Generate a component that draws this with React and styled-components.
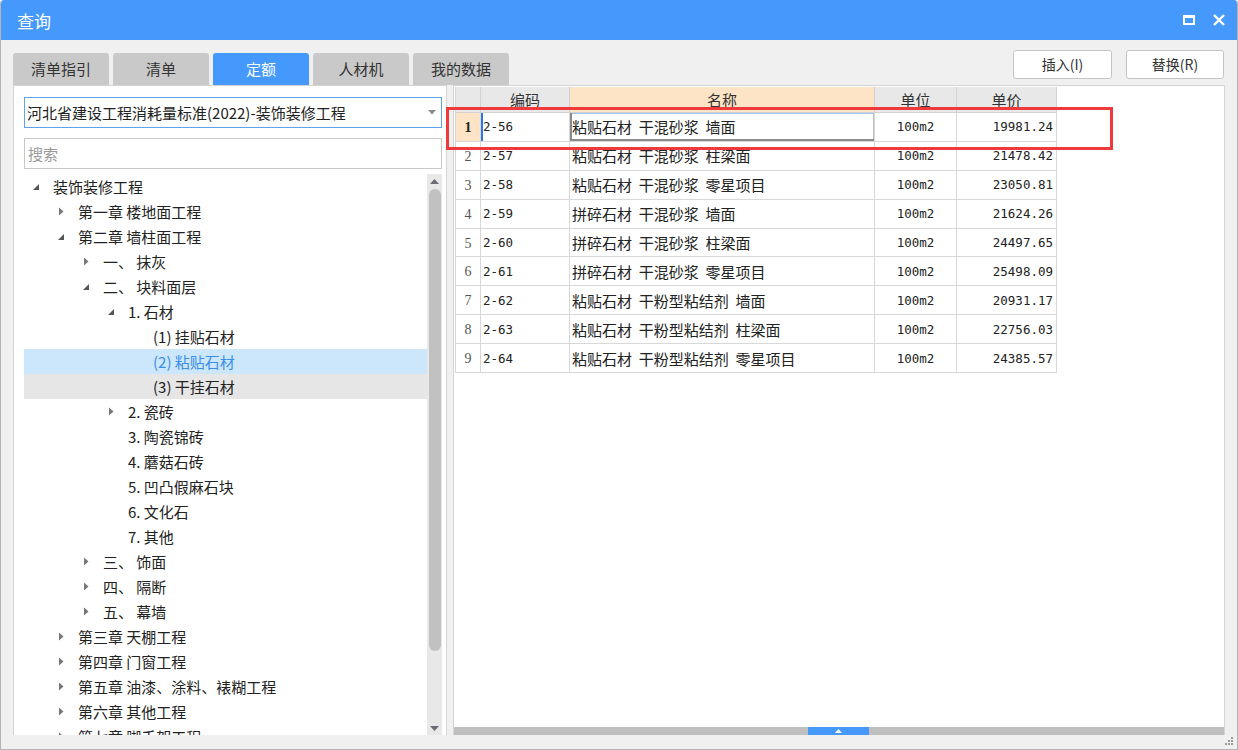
import styled, { createGlobalStyle } from "styled-components";

const GlobalStyle = createGlobalStyle`
  html, body { margin: 0; padding: 0; background: #ffffff; }
  body { font-family: "Noto Sans CJK SC", "Noto Sans", sans-serif; color: #222; }
  * { box-sizing: border-box; }
`;

const BLUE = "#4599fd";

const Window = styled.div`
  position: relative;
  width: 1238px;
  height: 750px;
  display: flex;
  flex-direction: column;
  background: #f0f0f0;
  border: 1px solid #b4b4b4;
  border-top: none;
  border-radius: 4px 4px 0 0;
  overflow: hidden;
`;

const TitleBar = styled.div`
  height: 40px;
  flex: none;
  background: ${BLUE};
  display: flex;
  align-items: center;
  padding: 0 12px 0 16px;
  color: #fff;
`;

const Title = styled.div`
  flex: 1;
  font-size: 17px;
  line-height: 20px;
  padding-top: 2px;
`;

const TitleButtons = styled.div`
  display: flex;
  align-items: center;
  gap: 18px;
`;

const Body = styled.div`
  flex: 1;
  min-height: 0;
  display: flex;
  flex-direction: column;
  padding: 0 12px 14px 12px;
`;

const TopRow = styled.div`
  height: 45px;
  flex: none;
  display: flex;
  align-items: flex-end;
`;

const Tabs = styled.div`
  display: flex;
  gap: 4px;
  flex: 1;
`;

const Tab = styled.div`
  width: 96px;
  height: 32px;
  border-radius: 3px 3px 0 0;
  background: ${({ $active }) => ($active ? BLUE : "#c9c9c9")};
  color: ${({ $active }) => ($active ? "#fff" : "#333")};
  font-size: 15px;
  line-height: 32px;
  text-align: center;
`;

const Actions = styled.div`
  align-self: flex-start;
  margin-top: 10px;
  margin-right: 1px;
  display: flex;
  gap: 14px;
`;

const Button = styled.div`
  width: ${({ $w }) => $w}px;
  height: 29px;
  background: #fff;
  border: 1px solid #c4c4c4;
  border-radius: 3px;
  font-size: 14px;
  line-height: 27px;
  text-align: center;
  color: #333;
`;

const Main = styled.div`
  flex: 1;
  min-height: 0;
  display: flex;
  gap: 6px;
`;

const LeftPanel = styled.div`
  width: 434px;
  flex: none;
  background: #fff;
  border: 1px solid #d4d4d4;
  border-bottom: none;
  padding: 11px 4px 0 10px;
  display: flex;
  flex-direction: column;
  min-height: 0;
`;

const Select = styled.div`
  height: 31px;
  flex: none;
  border: 1px solid #5ea3ee;
  display: flex;
  align-items: center;
  padding: 0 5px 0 2px;
  font-size: 15px;
  color: #222;
`;

const SelectText = styled.div`
  flex: 1;
  white-space: nowrap;
`;

const Search = styled.div`
  height: 31px;
  flex: none;
  margin-top: 10px;
  border: 1px solid #c8c8c8;
  padding-left: 3px;
  font-size: 15px;
  line-height: 29px;
  color: #9a9a9a;
`;

const TreeArea = styled.div`
  margin-top: 5px;
  flex: 1;
  min-height: 0;
  display: flex;
  overflow: hidden;
`;

const TreeList = styled.div`
  flex: 1;
  min-width: 0;
`;

const TreeRow = styled.div`
  height: 25px;
  display: flex;
  align-items: center;
  padding-left: ${({ $level }) => $level * 25}px;
  font-size: 15px;
  white-space: pre;
  background: ${({ $state }) =>
    $state === "selected" ? "#cce6fc" : $state === "hover" ? "#e6e6e6" : "transparent"};
  color: ${({ $state }) => ($state === "selected" ? "#3b8ee8" : "#222")};
`;

const Toggle = styled.div`
  width: 24px;
  height: 25px;
  flex: none;
  display: flex;
  align-items: center;
  justify-content: center;
  margin-right: 5px;
`;

const VScroll = styled.div`
  width: 15px;
  flex: none;
  background: #e8e8e8;
  display: flex;
  flex-direction: column;
  align-items: center;
`;

const ScrollArrow = styled.div`
  height: 14px;
  flex: none;
  display: flex;
  align-items: center;
  justify-content: center;
`;

const Thumb = styled.div`
  width: 12px;
  height: 462px;
  margin-top: 1px;
  border-radius: 6px;
  background: #c1c1c1;
  flex: none;
`;

const Spacer = styled.div`
  flex: 1;
`;

const RightPanel = styled.div`
  flex: 1;
  min-width: 0;
  background: #fff;
  border: 1px solid #d4d4d4;
  border-bottom: none;
  display: flex;
  flex-direction: column;
`;

const TableArea = styled.div`
  flex: 1;
  padding: 1px;
`;

const Grid = styled.div`
  display: grid;
  grid-template-columns: 25px 89px 305px 82px 100px;
  grid-auto-rows: auto;
  width: 601px;
  border-left: 1px solid #d6d6d6;
`;

const HeadCell = styled.div`
  height: 26px;
  background: ${({ $hl }) => ($hl ? "#fde4c6" : "#e8e8e8")};
  border-right: 1px solid #d2d2d2;
  border-bottom: 1px solid #d2d2d2;
  font-size: 15px;
  line-height: 25px;
  text-align: center;
  color: #333;
`;

const Cell = styled.div`
  height: 28.9px;
  border-right: 1px solid #d8d8d8;
  border-bottom: 1px solid #d8d8d8;
  display: flex;
  align-items: center;
  justify-content: ${({ $align }) => $align || "flex-start"};
  padding: 0 ${({ $pad }) => $pad ?? 2}px;
  white-space: pre;
  font-size: ${({ $mono }) => ($mono ? "12.5px" : "15px")};
  font-family: ${({ $mono }) =>
    $mono ? '"DejaVu Sans Mono", "Liberation Mono", monospace' : 'inherit'};
  color: #222;
  ${({ $cursor }) => $cursor && "box-shadow: inset 2px 0 0 #2a77e8;"}
  ${({ $focus }) =>
    $focus &&
    "box-shadow: inset 2px 0 0 #8a8a8a, inset 0 -2px 0 #8a8a8a, inset 0 1px 0 #9cc3ea, inset -1px 0 0 #bdbdbd;"}
`;

const RowNum = styled.div`
  height: 28.9px;
  border-right: 1px solid #d8d8d8;
  border-bottom: 1px solid #d8d8d8;
  background: ${({ $active }) => ($active ? "#fde4c6" : "#fff")};
  font-family: "Liberation Serif", "DejaVu Serif", serif;
  font-size: 14px;
  font-weight: ${({ $active }) => ($active ? 700 : 400)};
  color: ${({ $active }) => ($active ? "#222" : "#555")};
  display: flex;
  align-items: center;
  justify-content: center;
  padding-top: 2px;
`;

const HBar = styled.div`
  height: 8px;
  flex: none;
  background: #bfbfbf;
  display: flex;
`;

const HBarKnob = styled.div`
  margin-left: 354px;
  width: 61px;
  background: ${BLUE};
  display: flex;
  align-items: center;
  justify-content: center;
`;

const Highlight = styled.div`
  position: absolute;
  left: 445px;
  top: 107px;
  width: 667px;
  height: 43px;
  border: 3px solid #ee3a3a;
  pointer-events: none;
`;

const Grip = styled.svg`
  position: absolute;
  right: 3px;
  bottom: 3px;
`;

const treeData = [
  [0, "open", "装饰装修工程"],
  [1, "closed", "第一章 楼地面工程"],
  [1, "open", "第二章 墙柱面工程"],
  [2, "closed", "一、 抹灰"],
  [2, "open", "二、 块料面层"],
  [3, "open", "1. 石材"],
  [4, null, "(1) 挂贴石材"],
  [4, null, "(2) 粘贴石材", "selected"],
  [4, null, "(3) 干挂石材", "hover"],
  [3, "closed", "2. 瓷砖"],
  [3, null, "3. 陶瓷锦砖"],
  [3, null, "4. 蘑菇石砖"],
  [3, null, "5. 凹凸假麻石块"],
  [3, null, "6. 文化石"],
  [3, null, "7. 其他"],
  [2, "closed", "三、 饰面"],
  [2, "closed", "四、 隔断"],
  [2, "closed", "五、 幕墙"],
  [1, "closed", "第三章 天棚工程"],
  [1, "closed", "第四章 门窗工程"],
  [1, "closed", "第五章 油漆、涂料、裱糊工程"],
  [1, "closed", "第六章 其他工程"],
  [1, "closed", "第七章 脚手架工程"],
];

const rows = [
  ["2-56", "粘贴石材  干混砂浆  墙面", "19981.24"],
  ["2-57", "粘贴石材  干混砂浆  柱梁面", "21478.42"],
  ["2-58", "粘贴石材  干混砂浆  零星项目", "23050.81"],
  ["2-59", "拼碎石材  干混砂浆  墙面", "21624.26"],
  ["2-60", "拼碎石材  干混砂浆  柱梁面", "24497.65"],
  ["2-61", "拼碎石材  干混砂浆  零星项目", "25498.09"],
  ["2-62", "粘贴石材  干粉型粘结剂  墙面", "20931.17"],
  ["2-63", "粘贴石材  干粉型粘结剂  柱梁面", "22756.03"],
  ["2-64", "粘贴石材  干粉型粘结剂  零星项目", "24385.57"],
];

function ToggleIcon({ type }) {
  if (type === "open")
    return (
      <svg width="8" height="8" viewBox="0 0 8 8">
        <path d="M7 1 L7 7 L1 7 Z" fill="#555" />
      </svg>
    );
  if (type === "closed")
    return (
      <svg width="6" height="9" viewBox="0 0 6 9">
        <path d="M1 0.5 L5.5 4.5 L1 8.5 Z" fill="#777" />
      </svg>
    );
  return null;
}

export default function App() {
  return (
    <>
      <GlobalStyle />
      <Window>
        <TitleBar>
          <Title>查询</Title>
          <TitleButtons>
            <svg width="12" height="10" viewBox="0 0 12 10">
              <rect x="1" y="1.5" width="10" height="7.5" fill="none" stroke="#fff" strokeWidth="2" />
              <rect x="0" y="0" width="12" height="3" fill="#fff" />
            </svg>
            <svg width="12" height="12" viewBox="0 0 12 12">
              <path d="M1 1 L11 11 M11 1 L1 11" stroke="#fff" strokeWidth="2.4" />
            </svg>
          </TitleButtons>
        </TitleBar>
        <Body>
          <TopRow>
            <Tabs>
              <Tab>清单指引</Tab>
              <Tab>清单</Tab>
              <Tab $active>定额</Tab>
              <Tab>人材机</Tab>
              <Tab>我的数据</Tab>
            </Tabs>
            <Actions>
              <Button $w={99}>插入(I)</Button>
              <Button $w={98}>替换(R)</Button>
            </Actions>
          </TopRow>
          <Main>
            <LeftPanel>
              <Select>
                <SelectText>河北省建设工程消耗量标准(2022)-装饰装修工程</SelectText>
                <svg width="8" height="5" viewBox="0 0 8 5">
                  <path d="M0 0 L8 0 L4 4.5 Z" fill="#8a8a8a" />
                </svg>
              </Select>
              <Search>搜索</Search>
              <TreeArea>
                <TreeList>
                  {treeData.map(([level, toggle, label, state], i) => (
                    <TreeRow key={i} $level={level} $state={state}>
                      <Toggle>
                        <ToggleIcon type={toggle} />
                      </Toggle>
                      {label}
                    </TreeRow>
                  ))}
                </TreeList>
                <VScroll>
                  <ScrollArrow>
                    <svg width="9" height="5" viewBox="0 0 9 5">
                      <path d="M0 5 L9 5 L4.5 0 Z" fill="#6c6c74" />
                    </svg>
                  </ScrollArrow>
                  <Thumb />
                  <Spacer />
                  <ScrollArrow>
                    <svg width="9" height="5" viewBox="0 0 9 5">
                      <path d="M0 0 L9 0 L4.5 5 Z" fill="#6c6c74" />
                    </svg>
                  </ScrollArrow>
                </VScroll>
              </TreeArea>
            </LeftPanel>
            <RightPanel>
              <TableArea>
                <Grid>
                  <HeadCell />
                  <HeadCell>编码</HeadCell>
                  <HeadCell $hl>名称</HeadCell>
                  <HeadCell>单位</HeadCell>
                  <HeadCell>单价</HeadCell>
                  {rows.map(([code, name, price], i) => (
                    <Row key={code} index={i} code={code} name={name} price={price} />
                  ))}
                </Grid>
              </TableArea>
              <HBar>
                <HBarKnob>
                  <svg width="7" height="4" viewBox="0 0 7 4">
                    <path d="M0 4 L7 4 L3.5 0 Z" fill="#fff" />
                  </svg>
                </HBarKnob>
              </HBar>
            </RightPanel>
          </Main>
        </Body>
        <Highlight />
        <Grip width="10" height="10" viewBox="0 0 10 10">
          {[
            [7, 1], [4, 4], [7, 4], [1, 7], [4, 7], [7, 7],
          ].map(([x, y]) => (
            <rect key={`${x}-${y}`} x={x} y={y} width="2" height="2" fill="#9a9a9a" />
          ))}
        </Grip>
      </Window>
    </>
  );
}

function Row({ index, code, name, price }) {
  const active = index === 0;
  return (
    <>
      <RowNum $active={active}>{index + 1}</RowNum>
      <Cell $mono $cursor={active}>{code}</Cell>
      <Cell $focus={active}>{name}</Cell>
      <Cell $mono $align="center">100m2</Cell>
      <Cell $mono $align="flex-end" $pad={3}>{price}</Cell>
    </>
  );
}
